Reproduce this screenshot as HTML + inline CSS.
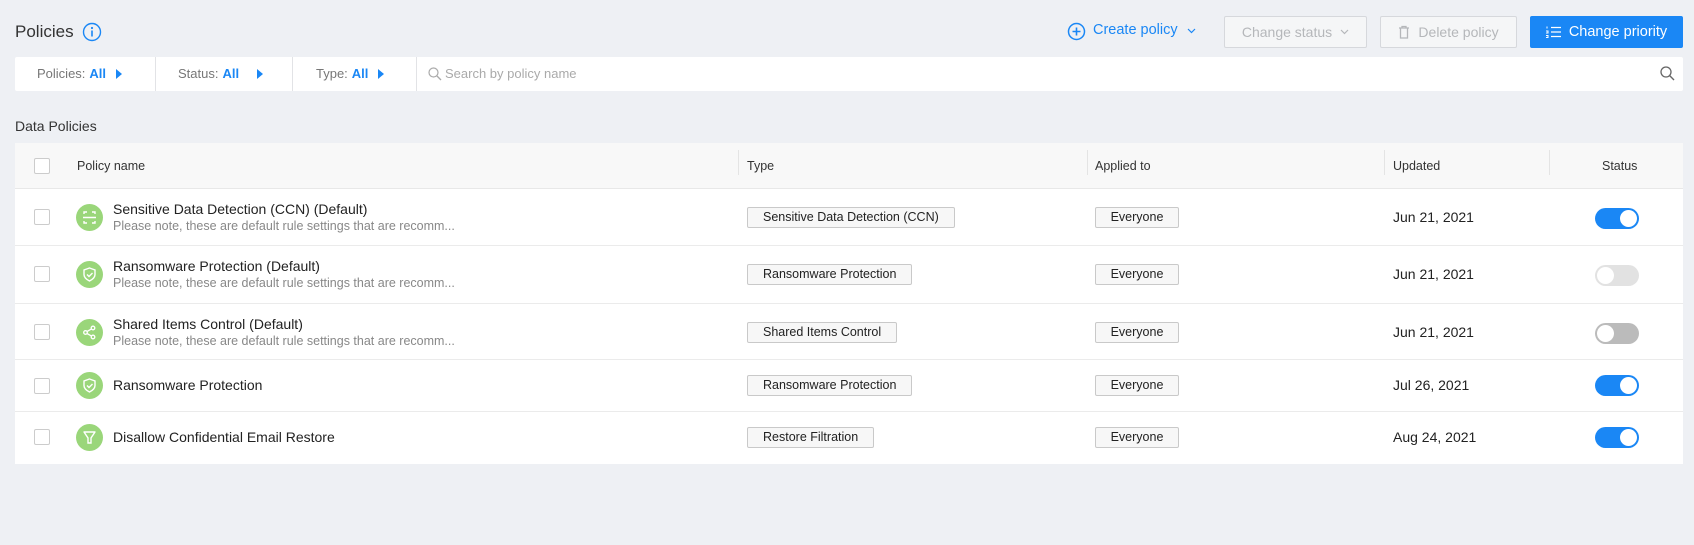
<!DOCTYPE html>
<html><head><meta charset="utf-8"><style>
*{margin:0;padding:0;box-sizing:border-box}
body{width:1694px;height:545px;background:#eef0f4;font-family:"Liberation Sans",Arial,sans-serif;position:relative;overflow:hidden;color:#222}
.a{position:absolute}
.title{left:15px;top:22px;font-size:17px;color:#333}
.btn{position:absolute;top:16px;height:32px;border:1px solid #d6d8dc;background:#f5f6f7;color:#b5b7ba;font-size:14px;display:flex;align-items:center;justify-content:center;gap:8px;border-radius:2px}
.filter{left:15px;top:57px;width:1668px;height:34px;background:#fff;border-radius:2px}
.sep{position:absolute;top:0;width:1px;height:34px;background:#e2e3e6}
.fl{position:absolute;top:0;line-height:34px;font-size:13px;color:#777}
.fl b{color:#1a87f5;font-weight:bold;margin-left:4px}
.tri{display:inline-block;width:0;height:0;border-left:6px solid #1a87f5;border-top:5px solid transparent;border-bottom:5px solid transparent;margin-left:10px;vertical-align:-1px}
.table{left:15px;top:143px;width:1668px;height:321px;background:#fff}
.head{position:absolute;left:0;top:0;width:1668px;height:46px;background:#f8f8f8;border-bottom:1px solid #e8e8e8}
.th{position:absolute;top:0;line-height:46px;font-size:12.5px;color:#333}
.hs{position:absolute;top:7px;width:1px;height:25px;background:#e4e4e4}
.cb{position:absolute;width:16px;height:16px;border:1px solid #ccc;border-radius:2px;background:#fff}
.row{position:absolute;left:0;width:1668px;border-bottom:1px solid #ebebeb}
.ic{position:absolute;left:61px;width:27px;height:27px;border-radius:50%;background:#9ad67a}
.ic svg{position:absolute;left:0;top:0}
.nm{position:absolute;left:98px;font-size:14px;color:#222}
.sub{position:absolute;left:98px;font-size:12.5px;color:#888}
.badge{position:absolute;height:21px;border:1px solid #c9c9c9;background:#f7f7f7;font-size:12.5px;line-height:19px;padding:0 15px;border-radius:2px;color:#222}
.dt{position:absolute;left:1378px;font-size:14px;color:#222}
.tg{position:absolute;left:1580px;width:44px;height:21px;border-radius:11px;background:#1a87f5}
.tg i{position:absolute;top:2px;width:17px;height:17px;border-radius:50%;background:#fff}
</style></head><body>
<div class="a title">Policies</div>
<svg class="a" style="left:82px;top:22px" width="20" height="20" viewBox="0 0 20 20"><circle cx="10" cy="10" r="8.5" fill="none" stroke="#1a87f5" stroke-width="1.4"/><circle cx="10" cy="6" r="1.1" fill="#1a87f5"/><rect x="9.2" y="8.5" width="1.6" height="6" fill="#1a87f5"/></svg>

<svg class="a" style="left:1067px;top:22px" width="19" height="19" viewBox="0 0 19 19"><circle cx="9.5" cy="9.5" r="8" fill="none" stroke="#1a87f5" stroke-width="1.5"/><path d="M9.5 5.5v8M5.5 9.5h8" stroke="#1a87f5" stroke-width="1.6"/></svg>
<div class="a" style="left:1093px;top:22px;font-size:14.5px;color:#1a87f5">Create policy</div>
<svg class="a" style="left:1187px;top:28px" width="9" height="6" viewBox="0 0 9 6"><path d="M1 1l3.5 3.5L8 1" fill="none" stroke="#1a87f5" stroke-width="1.2"/></svg>

<div class="btn" style="left:1224px;width:143px">Change status <svg width="9" height="6" viewBox="0 0 9 6"><path d="M1 1l3.5 3.5L8 1" fill="none" stroke="#b5b7ba" stroke-width="1.2"/></svg></div>
<div class="btn" style="left:1380px;width:137px"><svg width="12" height="14" viewBox="0 0 12 14"><path d="M1 3h10M4 3V1.5h4V3M2.5 3v10h7V3" fill="none" stroke="#b5b7ba" stroke-width="1.3"/></svg>Delete policy</div>
<div class="btn" style="left:1530px;width:153px;background:#1a87f5;border-color:#1a87f5;color:#fff;font-size:14.5px"><svg width="15" height="12" viewBox="0 0 15 12"><path d="M5 1.5h10M5 6h10M5 10.5h10" stroke="#fff" stroke-width="1.3"/><path d="M1 0.5v2M0 5h2v2H0M0 9.5h2v2H0" stroke="#fff" stroke-width="1" fill="none"/></svg>Change priority</div>

<div class="a filter">
<div class="fl" style="left:22px">Policies:<b>All</b><span class="tri"></span></div>
<div class="sep" style="left:140px"></div>
<div class="fl" style="left:163px">Status:<b>All</b><span class="tri" style="margin-left:18px"></span></div>
<div class="sep" style="left:277px"></div>
<div class="fl" style="left:301px">Type:<b>All</b><span class="tri"></span></div>
<div class="sep" style="left:401px"></div>
<svg class="a" style="left:413px;top:10px" width="14" height="14" viewBox="0 0 14 14"><circle cx="5.5" cy="5.5" r="4.5" fill="none" stroke="#aaa" stroke-width="1.2"/><path d="M9 9l4 4" stroke="#aaa" stroke-width="1.3"/></svg>
<div class="fl" style="left:430px;color:#aaa">Search by policy name</div>
<svg class="a" style="left:1645px;top:9px" width="15" height="15" viewBox="0 0 15 15"><circle cx="6" cy="6" r="5" fill="none" stroke="#666" stroke-width="1.3"/><path d="M9.8 9.8l4.2 4.2" stroke="#666" stroke-width="1.4"/></svg>
</div>

<div class="a" style="left:15px;top:118px;font-size:14px;color:#333">Data Policies</div>

<div class="a table">
<div class="head">
<div class="cb" style="left:19px;top:15px"></div>
<div class="th" style="left:62px">Policy name</div>
<div class="hs" style="left:723px"></div><div class="th" style="left:732px">Type</div>
<div class="hs" style="left:1072px"></div><div class="th" style="left:1080px">Applied to</div>
<div class="hs" style="left:1369px"></div><div class="th" style="left:1378px">Updated</div>
<div class="hs" style="left:1534px"></div><div class="th" style="left:1587px">Status</div>
</div>

<!-- row1 -->
<div class="row" style="top:46px;height:57px">
<div class="cb" style="left:19px;top:20px"></div>
<div class="ic" style="top:15px"><svg width="27" height="27" viewBox="0 0 27 27" fill="none" stroke="#fff" stroke-width="1.4"><path d="M8 10V8h3M16 8h3v2M8 17v2h3M16 19h3v-2M7 13.5h13"/></svg></div>
<div class="nm" style="top:12px">Sensitive Data Detection (CCN) (Default)</div>
<div class="sub" style="top:30px">Please note, these are default rule settings that are recomm...</div>
<div class="badge" style="left:732px;top:18px">Sensitive Data Detection (CCN)</div>
<div class="badge" style="left:1080px;top:18px;width:84px;text-align:center;padding:0">Everyone</div>
<div class="dt" style="top:20px">Jun 21, 2021</div>
<div class="tg" style="top:19px"><i style="left:25px"></i></div>
</div>
<!-- row2 -->
<div class="row" style="top:103px;height:58px">
<div class="cb" style="left:19px;top:20px"></div>
<div class="ic" style="top:15px"><svg width="27" height="27" viewBox="0 0 27 27" fill="none" stroke="#fff" stroke-width="1.4"><path d="M13.5 7l5.5 2v4.5c0 3-2.5 5-5.5 6.5C10.5 18.5 8 16.5 8 13.5V9z"/><path d="M11 13.5l2 2 3.5-3.5"/></svg></div>
<div class="nm" style="top:12px">Ransomware Protection (Default)</div>
<div class="sub" style="top:30px">Please note, these are default rule settings that are recomm...</div>
<div class="badge" style="left:732px;top:18px">Ransomware Protection</div>
<div class="badge" style="left:1080px;top:18px;width:84px;text-align:center;padding:0">Everyone</div>
<div class="dt" style="top:20px">Jun 21, 2021</div>
<div class="tg" style="top:19px;background:#e2e2e2"><i style="left:2px"></i></div>
</div>
<!-- row3 -->
<div class="row" style="top:161px;height:56px">
<div class="cb" style="left:19px;top:20px"></div>
<div class="ic" style="top:15px"><svg width="27" height="27" viewBox="0 0 27 27" fill="none" stroke="#fff" stroke-width="1.3"><circle cx="9.5" cy="13.5" r="1.8"/><circle cx="17" cy="9" r="1.8"/><circle cx="17" cy="18" r="1.8"/><path d="M11 12.5l4.5-2.6M11 14.5l4.5 2.6"/></svg></div>
<div class="nm" style="top:12px">Shared Items Control (Default)</div>
<div class="sub" style="top:30px">Please note, these are default rule settings that are recomm...</div>
<div class="badge" style="left:732px;top:18px">Shared Items Control</div>
<div class="badge" style="left:1080px;top:18px;width:84px;text-align:center;padding:0">Everyone</div>
<div class="dt" style="top:20px">Jun 21, 2021</div>
<div class="tg" style="top:19px;background:#bbb"><i style="left:2px"></i></div>
</div>
<!-- row4 -->
<div class="row" style="top:217px;height:52px">
<div class="cb" style="left:19px;top:18px"></div>
<div class="ic" style="top:12px"><svg width="27" height="27" viewBox="0 0 27 27" fill="none" stroke="#fff" stroke-width="1.4"><path d="M13.5 7l5.5 2v4.5c0 3-2.5 5-5.5 6.5C10.5 18.5 8 16.5 8 13.5V9z"/><path d="M11 13.5l2 2 3.5-3.5"/></svg></div>
<div class="nm" style="top:17px">Ransomware Protection</div>
<div class="badge" style="left:732px;top:15px">Ransomware Protection</div>
<div class="badge" style="left:1080px;top:15px;width:84px;text-align:center;padding:0">Everyone</div>
<div class="dt" style="top:17px">Jul 26, 2021</div>
<div class="tg" style="top:15px"><i style="left:25px"></i></div>
</div>
<!-- row5 -->
<div class="row" style="top:269px;height:52px;border-bottom:none">
<div class="cb" style="left:19px;top:17px"></div>
<div class="ic" style="top:12px"><svg width="27" height="27" viewBox="0 0 27 27" fill="none" stroke="#fff" stroke-width="1.4"><path d="M7.5 8h12M8 8l4 6v5h3v-5l4-6"/></svg></div>
<div class="nm" style="top:17px">Disallow Confidential Email Restore</div>
<div class="badge" style="left:732px;top:15px">Restore Filtration</div>
<div class="badge" style="left:1080px;top:15px;width:84px;text-align:center;padding:0">Everyone</div>
<div class="dt" style="top:17px">Aug 24, 2021</div>
<div class="tg" style="top:15px"><i style="left:25px"></i></div>
</div>
</div>
</body></html>
